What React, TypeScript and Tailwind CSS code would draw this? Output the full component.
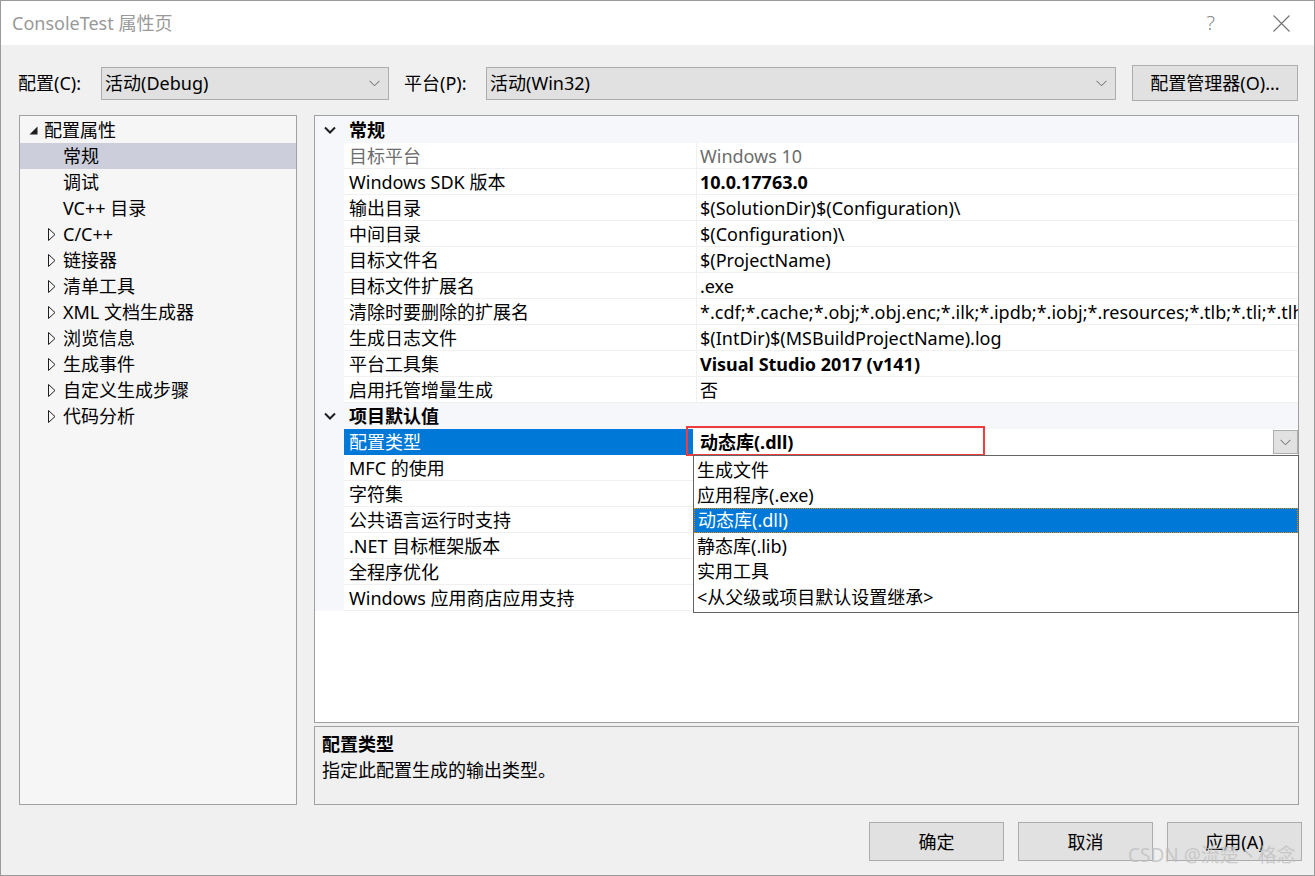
import React from "react";

type Prop = { name: string; value?: string; bold?: boolean; dim?: boolean };

const general: Prop[] = [
  { name: "目标平台", value: "Windows 10", dim: true },
  { name: "Windows SDK 版本", value: "10.0.17763.0", bold: true },
  { name: "输出目录", value: "$(SolutionDir)$(Configuration)\\" },
  { name: "中间目录", value: "$(Configuration)\\" },
  { name: "目标文件名", value: "$(ProjectName)" },
  { name: "目标文件扩展名", value: ".exe" },
  {
    name: "清除时要删除的扩展名",
    value:
      "*.cdf;*.cache;*.obj;*.obj.enc;*.ilk;*.ipdb;*.iobj;*.resources;*.tlb;*.tli;*.tlh;*.tmp;*.rsp;*.pgc;*.pgd;*.meta;*.tlog;*.manifest;*.res",
  },
  { name: "生成日志文件", value: "$(IntDir)$(MSBuildProjectName).log" },
  { name: "平台工具集", value: "Visual Studio 2017 (v141)", bold: true },
  { name: "启用托管增量生成", value: "否" },
];

const defaults: Prop[] = [
  { name: "MFC 的使用" },
  { name: "字符集" },
  { name: "公共语言运行时支持" },
  { name: ".NET 目标框架版本" },
  { name: "全程序优化" },
  { name: "Windows 应用商店应用支持" },
];

const treeChildren = ["C/C++", "链接器", "清单工具", "XML 文档生成器", "浏览信息", "生成事件", "自定义生成步骤", "代码分析"];

const options = ["生成文件", "应用程序(.exe)", "动态库(.dll)", "静态库(.lib)", "实用工具", "<从父级或项目默认设置继承>"];

function ComboChevron() {
  return (
    <svg width="11" height="7" viewBox="0 0 11 7" className="shrink-0">
      <path d="M0.5 0.8 L5.5 5.8 L10.5 0.8" fill="none" stroke="#606060" strokeWidth="1" />
    </svg>
  );
}

function Combo({ text, width }: { text: string; width: string }) {
  return (
    <div className={`${width} h-[33px] flex items-center justify-between bg-[#e1e1e1] border border-[#adadad] pl-[3px] pr-[8px]`}>
      <span>{text}</span>
      <ComboChevron />
    </div>
  );
}

function Btn({ label }: { label: string }) {
  return (
    <div className="w-[135px] h-[39px] flex items-center justify-center bg-[#e1e1e1] border border-[#adadad]">{label}</div>
  );
}

function CategoryRow({ label, first }: { label: string; first?: boolean }) {
  return (
    <div className={`flex items-center bg-[#f5f7fa] ${first ? "h-[27px]" : "h-[26px]"}`}>
      <div className="w-[29px] flex justify-center">
        <svg width="12" height="8" viewBox="0 0 12 8">
          <path d="M1 1.5 L6 6.5 L11 1.5" fill="none" stroke="#1e1e1e" strokeWidth="2" />
        </svg>
      </div>
      <span className="pl-[5px] font-bold">{label}</span>
    </div>
  );
}

function PropRow({ p }: { p: Prop }) {
  return (
    <div className="flex h-[26px]">
      <div className="w-[29px] shrink-0 bg-[#f5f7fa]" />
      <div className="flex flex-1 min-w-0 bg-white border-b border-[#f0f0f0]">
        <div className={`w-[353px] shrink-0 flex items-center pl-[5px] border-r border-[#f0f0f0] ${p.dim ? "text-[#6d6d6d]" : ""}`}>
          {p.name}
        </div>
        <div
          className={`flex-1 min-w-0 flex items-center pl-[3px] whitespace-nowrap overflow-hidden ${p.bold ? "font-bold" : ""} ${p.dim ? "text-[#6d6d6d]" : ""}`}
        >
          {p.value}
        </div>
      </div>
    </div>
  );
}

export default function App() {
  return (
    <div className="w-[1315px] h-[876px] relative overflow-hidden flex flex-col bg-[#f0f0f0] border border-[#9a9a9a] text-[18px] leading-none text-[#000] font-['Noto_Sans','Noto_Sans_CJK_SC',sans-serif]">
      {/* title bar */}
      <div className="h-[44px] shrink-0 bg-white flex items-center justify-between pl-[11px] pr-[24px]">
        <span className="text-[18px] text-[#999999]">ConsoleTest 属性页</span>
        <div className="flex items-center gap-[58px]">
          <span className="text-[20px] text-[#8a8a8a] font-light">?</span>
          <svg width="17" height="17" viewBox="0 0 17 17">
            <path d="M0.5 0.5 L16.5 16.5 M16.5 0.5 L0.5 16.5" stroke="#777" strokeWidth="1.2" />
          </svg>
        </div>
      </div>

      {/* configuration row */}
      <div className="flex items-center h-[36px] mt-[20px] pl-[17px]">
        <span className="w-[83px]">配置(C):</span>
        <Combo text="活动(Debug)" width="w-[288px]" />
        <span className="ml-[15px] w-[82px]">平台(P):</span>
        <Combo text="活动(Win32)" width="w-[630px]" />
        <div className="ml-[16px] w-[166px] h-[36px] flex items-center justify-center bg-[#e1e1e1] border border-[#adadad]">
          配置管理器(O)...
        </div>
      </div>

      {/* main */}
      <div className="flex mt-[14px] pl-[18px] h-[690px]">
        {/* tree */}
        <div className="w-[278px] h-full border border-[#a0a0a0] bg-[#f6f6f6] pt-[1px]">
          <div className="h-[26px] flex items-center">
            <svg width="9" height="9" viewBox="0 0 9 9" className="ml-[9px] mr-[6px]">
              <path d="M8.5 0.5 L8.5 8.5 L0.5 8.5 Z" fill="#1e1e1e" />
            </svg>
            <span>配置属性</span>
          </div>
          <div className="h-[26px] flex items-center bg-[#cccedb] pl-[43px]">常规</div>
          <div className="h-[26px] flex items-center pl-[43px]">调试</div>
          <div className="h-[26px] flex items-center pl-[43px]">VC++ 目录</div>
          {treeChildren.map((t) => (
            <div key={t} className="h-[26px] flex items-center">
              <svg width="8" height="13" viewBox="0 0 8 13" className="ml-[28px] mr-[7px]">
                <path d="M0.5 0.5 L7 6.5 L0.5 12.5 Z" fill="none" stroke="#1e1e1e" strokeWidth="1" />
              </svg>
              <span>{t}</span>
            </div>
          ))}
        </div>

        {/* right column */}
        <div className="ml-[17px] w-[985px] flex flex-col">
          <div className="relative h-[608px] border border-[#a0a0a0] bg-white">
            <CategoryRow label="常规" first />
            {general.map((p) => (
              <PropRow key={p.name} p={p} />
            ))}
            <CategoryRow label="项目默认值" />
            {/* selected row with editor */}
            <div className="flex h-[26px]">
              <div className="w-[29px] shrink-0 bg-[#f5f7fa]" />
              <div className="w-[349px] shrink-0 flex items-center pl-[5px] bg-[#0078d7] text-white">配置类型</div>
              <div className="flex-1 flex items-center justify-between bg-white pl-[7px]">
                <span className="font-bold">动态库(.dll)</span>
                <div className="w-[25px] h-[24px] flex items-center justify-center bg-[#e1e1e1] border border-[#adadad]">
                  <ComboChevron />
                </div>
              </div>
            </div>
            {defaults.map((p) => (
              <PropRow key={p.name} p={p} />
            ))}

            {/* red annotation box */}
            <div className="absolute left-[371px] top-[310px] w-[299px] h-[30px] border-2 border-[#f03c3c]" />

            {/* open dropdown list */}
            <div className="absolute left-[378px] top-[339px] right-[-1px] h-[158px] bg-white border border-[#646464] pt-[1px]">
              {options.map((o, i) => (
                <div
                  key={o}
                  className={`h-[25.4px] flex items-center pl-[3px] ${
                    i === 2 ? "bg-[#0078d7] text-white border border-dotted border-[#e08a00]" : ""
                  }`}
                >
                  {o}
                </div>
              ))}
            </div>
          </div>

          {/* description */}
          <div className="mt-[3px] h-[79px] border border-[#a0a0a0] bg-[#f0f0f0] pl-[7px] pt-[8px]">
            <div className="font-bold h-[18px] flex items-center">配置类型</div>
            <div className="mt-[8px] h-[18px] flex items-center">指定此配置生成的输出类型。</div>
          </div>
        </div>
      </div>

      {/* buttons */}
      <div className="flex justify-end gap-[14px] mt-[17px] pr-[12px]">
        <Btn label="确定" />
        <Btn label="取消" />
        <Btn label="应用(A)" />
      </div>

      {/* watermark */}
      <div className="absolute left-[1127px] top-[845px] text-[19px] text-[#c0c0c0]/80 pointer-events-none">
        CSDN @流楚丶格念
      </div>
    </div>
  );
}
